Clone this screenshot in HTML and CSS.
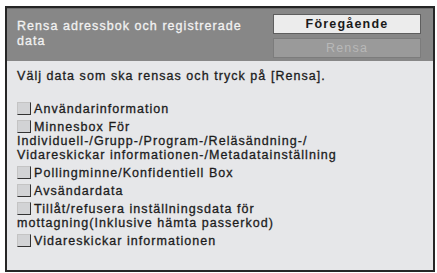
FILE: index.html
```html
<!DOCTYPE html>
<html>
<head>
<meta charset="utf-8">
<link rel="stylesheet" href="styles.css">
</head>
<body>
<div class="frame">
  <div class="header">
    <div class="title">Rensa adressbok och registrerade data</div>
    <div class="buttons">
      <div class="btn">Föregående</div>
      <div class="btn disabled">Rensa</div>
    </div>
  </div>
  <div class="content">
    <div class="intro">Välj data som ska rensas och tryck på [Rensa].</div>
    <ul class="list">
      <li><span class="cb"></span>Användarinformation</li>
      <li><span class="cb"></span>Minnesbox För<br>Individuell-/Grupp-/Program-/Reläsändning-/<br>Vidareskickar informationen-/Metadatainställning</li>
      <li><span class="cb"></span>Pollingminne/Konfidentiell Box</li>
      <li><span class="cb"></span>Avsändardata</li>
      <li><span class="cb"></span>Tillåt/refusera inställningsdata för<br>mottagning(Inklusive hämta passerkod)</li>
      <li><span class="cb"></span>Vidareskickar informationen</li>
    </ul>
  </div>
</div>
</body>
</html>
```

FILE: styles.css
```css
html, body {
  margin: 0;
  padding: 0;
  background: #ffffff;
}
body {
  font-family: "Liberation Sans", Arial, sans-serif;
  font-size: 12.5px;
  letter-spacing: 1.05px;
  color: #1c1c1c;
  -webkit-text-stroke: 0.3px currentColor;
}
.frame {
  margin: 6px 0 0 5px;
  width: 426px;
  height: 262px;
  border: 2px solid #262626;
  background: #e6e7e9;
  display: flex;
  flex-direction: column;
}
.header {
  background: #878787;
  height: 52px;
  border-top: 1px solid #6e6e6e;
  display: flex;
  justify-content: space-between;
  padding: 0 12px 0 10px;
}
.title {
  color: #f2f2f2;
  width: 250px;
  line-height: 15px;
  padding-top: 10px;
}
.buttons {
  display: flex;
  flex-direction: column;
  gap: 4px;
  padding-top: 5px;
}
.btn {
  width: 146px;
  height: 18px;
  line-height: 18px;
  text-align: center;
  background: #ececec;
  border: 1px solid #5e5e5e;
  color: #1a1a1a;
  font-weight: bold;
  letter-spacing: 1.2px;
  -webkit-text-stroke: 0;
}
.btn.disabled {
  background: #9a9a9a;
  border-color: #7c7c7c;
  color: #b8b8b8;
  font-weight: normal;
}
.content {
  padding: 8px 10px 0 10px;
}
.intro {
  line-height: 14px;
}
.list {
  list-style: none;
  margin: 19px 0 0 0;
  padding: 0;
}
.list li {
  line-height: 14px;
  margin-bottom: 4px;
}
.cb {
  display: inline-block;
  width: 12px;
  height: 11px;
  background: #d2d3d5;
  border-top: 1px solid #c4c4c4;
  border-left: 1px solid #c4c4c4;
  border-right: 1px solid #333;
  border-bottom: 1px solid #333;
  vertical-align: -2px;
  margin-right: 3px;
  -webkit-text-stroke: 0;
}
```
